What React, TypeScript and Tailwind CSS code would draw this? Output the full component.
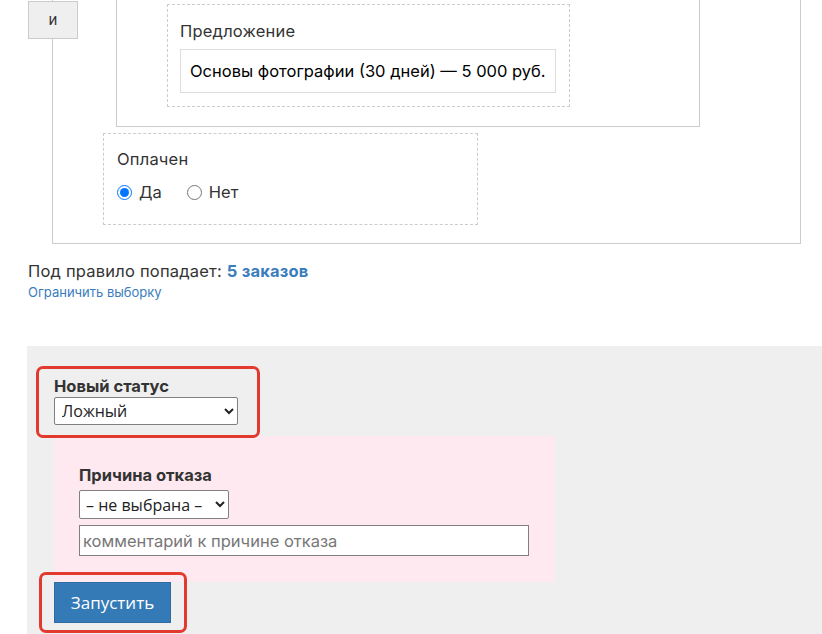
export default function App() {
  return (
    <div className="min-h-screen bg-white font-['Inter',sans-serif] text-[16.5px] text-[#333] overflow-hidden">
      <div className="pl-[28px]">
        {/* Outer condition group (scrolled, top is above the viewport) */}
        <div className="relative ml-[24px] w-[749px] border-x border-b border-[#cccccc] pb-[18px]">
          <div className="absolute -left-[25px] top-[1px] flex h-[38px] w-[50px] items-center justify-center border border-[#cccccc] bg-[#efefef] text-[15px] text-[#333]">
            и
          </div>

          <div className="ml-[63px] w-[584px] border-x border-b border-[#cccccc] pb-[19px] pt-[4px]">
            <div className="ml-[50px] w-[403px] border border-dashed border-[#cccccc] px-[12px] pb-[13px] pt-[15px]">
              <div className="leading-[22px] tracking-[0.2px] text-[#333]">Предложение</div>
              <div className="mt-[7px] flex h-[44px] w-[376px] items-center whitespace-nowrap border border-[#dddddd] pl-[9px] text-black">
                Основы фотографии (30 дней) — 5 000 руб.
              </div>
            </div>
          </div>

          <div className="ml-[50px] mt-[6px] h-[92px] w-[375px] border border-dashed border-[#cccccc] px-[13px] pt-[14px]">
            <div className="leading-[22px] tracking-[0.2px] text-[#333]">Оплачен</div>
            <div className="mt-[10px] flex items-center">
              <label className="flex items-center">
                <input
                  type="radio"
                  name="paid"
                  defaultChecked
                  className="m-0 h-[15px] w-[15px] accent-[#0075ff]"
                />
                <span className="ml-[7px]">Да</span>
              </label>
              <label className="ml-[25px] flex items-center">
                <input
                  type="radio"
                  name="paid"
                  className="m-0 h-[15px] w-[15px] accent-[#0075ff]"
                />
                <span className="ml-[7px]">Нет</span>
              </label>
            </div>
          </div>
        </div>

        <div className="mt-[17px] leading-[20px] tracking-[0.2px]">
          Под правило попадает:{" "}
          <span className="font-bold text-[#3a7dbd]">5 заказов</span>
        </div>
        <div className="mt-[3px] text-[13px] leading-[16px] text-[#3a7dbd]">
          Ограничить выборку
        </div>
      </div>

      {/* Action panel */}
      <div className="ml-[27px] mt-[46px] bg-[#efefef] pb-[40px] pl-[27px] pt-[20px]">
        <div className="relative z-10 -ml-[18px] w-[224px] rounded-[7px] border-[3px] border-[#e23a2f] pb-[10px] pl-[15px] pt-[6px]">
          <div className="font-bold leading-[22px] text-[#333]">Новый статус</div>
          <select className="h-[28px] w-[184px] rounded-[2px] border border-[#808080] bg-white px-[3px] font-['Open_Sans',sans-serif] text-[16px] text-[#222]">
            <option>Ложный</option>
          </select>
        </div>

        <div className="-mt-[2px] w-[501px] bg-[#fde9ef] pb-[26px] pl-[25px] pt-[29px]">
          <div className="font-bold leading-[20px] text-[#333]">Причина отказа</div>
          <select className="mt-[5px] h-[29px] w-[150px] rounded-[2px] border border-[#808080] bg-white px-[2px] font-['Open_Sans',sans-serif] text-[16px] text-[#222]">
            <option>– не выбрана –</option>
          </select>
          <input
            type="text"
            placeholder="комментарий к причине отказа"
            className="mt-[6px] block h-[31px] w-[450px] border border-[#808080] bg-white px-[3px] text-[16.5px] placeholder:text-[#777]"
          />
        </div>

        <div className="relative z-10 -ml-[15px] -mt-[10px] w-[148px] rounded-[7px] border-[3px] border-[#e23a2f] pb-[7px] pl-[12px] pt-[7px]">
          <button className="h-[41px] w-[117px] border border-[#2e6da4] bg-[#337ab7] font-['Open_Sans',sans-serif] text-[17px] text-white">
            Запустить
          </button>
        </div>
      </div>
    </div>
  );
}
